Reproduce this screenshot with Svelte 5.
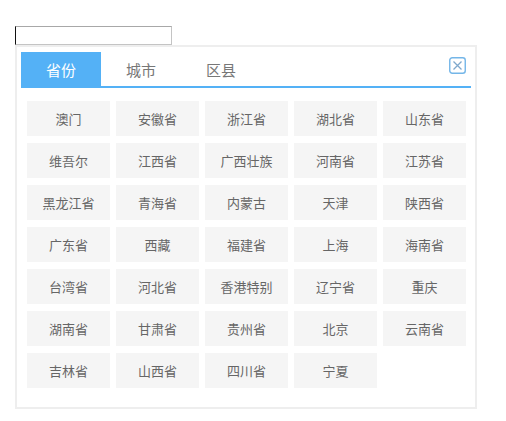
<script>
  const tabs = ['省份', '城市', '区县'];
  const items = ['澳门','安徽省','浙江省','湖北省','山东省','维吾尔','江西省','广西壮族','河南省','江苏省','黑龙江省','青海省','内蒙古','天津','陕西省','广东省','西藏','福建省','上海','海南省','台湾省','河北省','香港特别','辽宁省','重庆','湖南省','甘肃省','贵州省','北京','云南省','吉林省','山西省','四川省','宁夏'];
</script>

<div class="page">
  <input class="field" type="text" />
  <div class="panel">
    <div class="tabs">
      {#each tabs as t, i}
        <div class="tab" class:active={i === 0}>{t}</div>
      {/each}
      <div class="close">
        <svg width="17" height="17" viewBox="0 0 17 17" fill="none">
          <rect x="0.75" y="0.75" width="15.5" height="15.5" rx="2.5" stroke="#74b6e8" stroke-width="1.4"/>
          <path d="M4.5 4.5 L12.5 12.5 M12.5 4.5 L4.5 12.5" stroke="#7fa8cc" stroke-width="1.3"/>
        </svg>
      </div>
    </div>
    <div class="grid">
      {#each items as it}
        <div class="item">{it}</div>
      {/each}
    </div>
  </div>
</div>

<style>
  :global(body) {
    margin: 0;
    background: #fff;
  }
  .page {
    padding: 26px 0 0 15px;
    font-family: "Noto Sans CJK SC", "Liberation Sans", sans-serif;
  }
  .field {
    display: block;
    box-sizing: border-box;
    width: 157px;
    height: 19px;
    margin: 0;
    padding: 0;
    border: 1px solid #c4c4c4;
    border-left: 1px solid #111;
    border-top-color: #a8a8a8;
    background: #fff;
    outline: none;
  }
  .panel {
    box-sizing: border-box;
    width: 462px;
    height: 364px;
    padding: 5px 4px;
    border: 2px solid #eeeeee;
    background: #fff;
  }
  .tabs {
    display: flex;
    position: relative;
    width: 450px;
    height: 36px;
    box-sizing: border-box;
    border-bottom: 2px solid #54b1f6;
  }
  .tab {
    width: 80px;
    height: 36px;
    line-height: 36px;
    text-align: center;
    font-size: 15px;
    color: #777;
    flex: none;
  }
  .tab.active {
    background: #54b1f6;
    color: #fff;
  }
  .close {
    position: absolute;
    right: 5px;
    top: 5px;
    width: 17px;
    height: 17px;
    line-height: 0;
  }
  .grid {
    display: grid;
    grid-template-columns: repeat(5, 83px);
    grid-auto-rows: 35px;
    column-gap: 6px;
    row-gap: 7px;
    padding: 13px 0 0 6px;
  }
  .item {
    background: #f5f5f5;
    color: #666;
    font-size: 13px;
    line-height: 35px;
    text-align: center;
    white-space: nowrap;
  }
</style>
